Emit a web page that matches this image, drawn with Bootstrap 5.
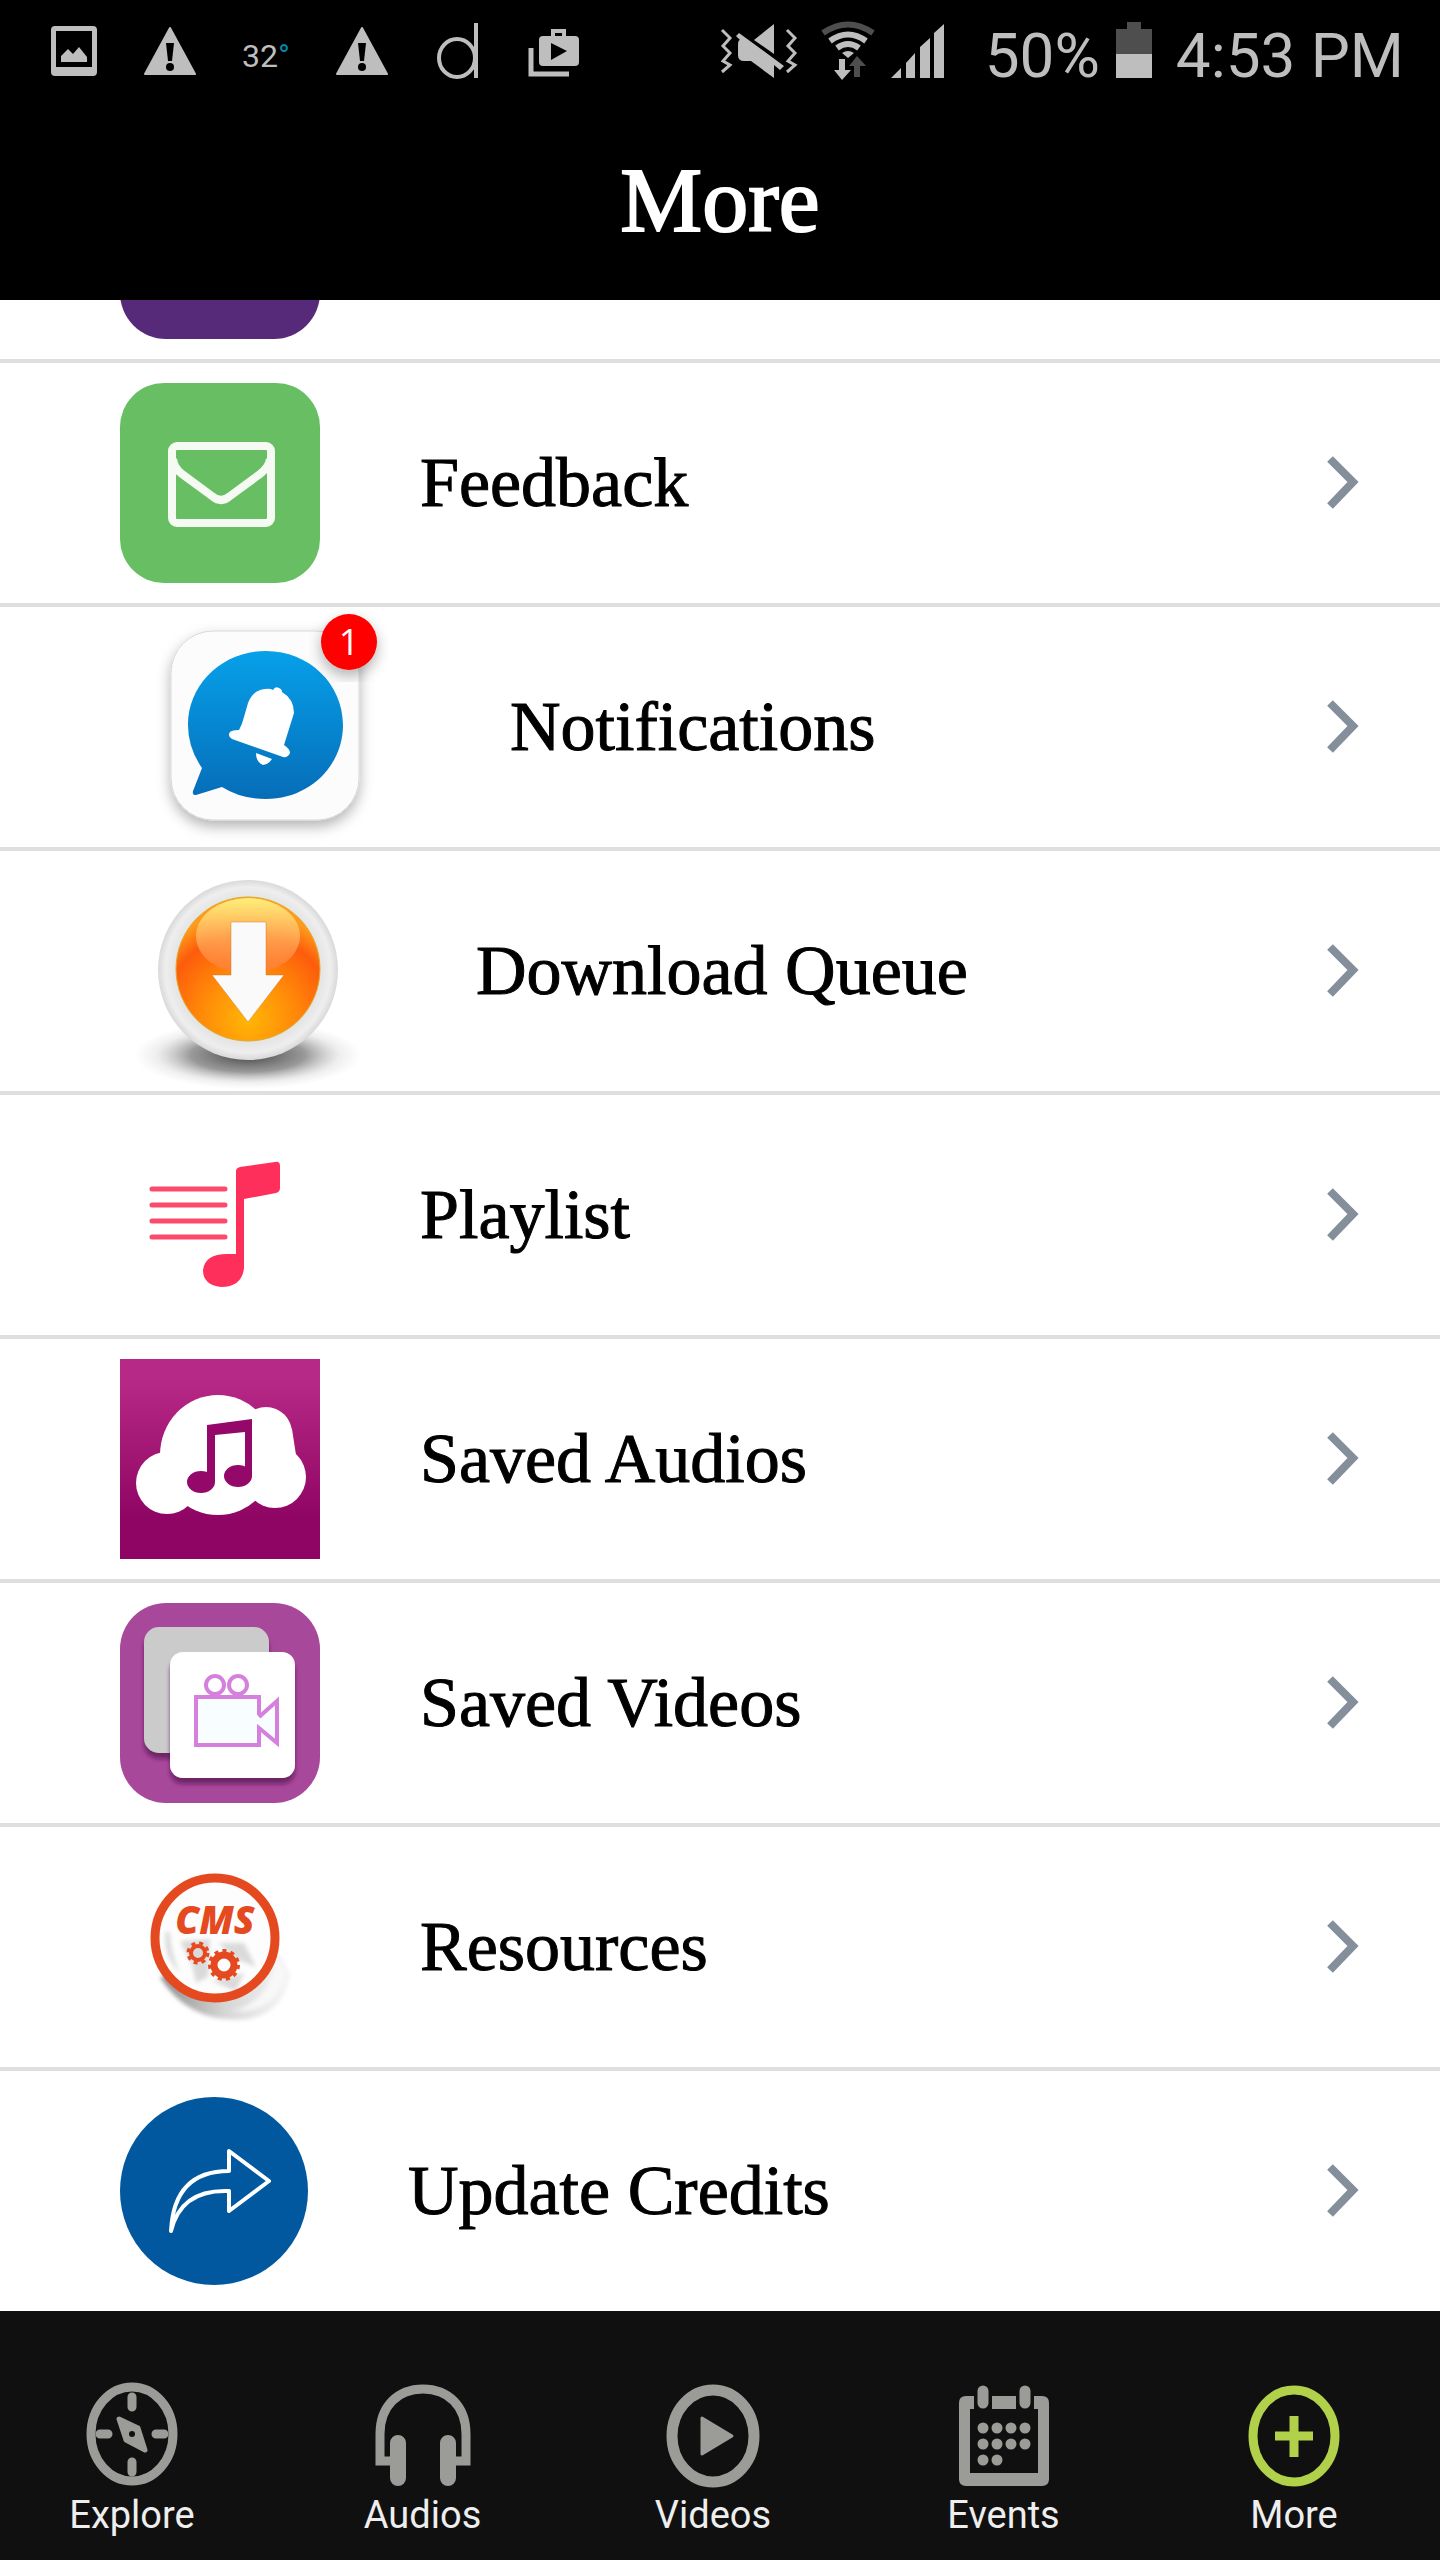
<!DOCTYPE html>
<html lang="en">
<head>
<meta charset="utf-8">
<meta name="viewport" content="width=device-width, initial-scale=1">
<title>More</title>
<link href="https://cdn.jsdelivr.net/npm/bootstrap@5.3.0/dist/css/bootstrap.min.css" rel="stylesheet">
<style>
  body { font-family: "Liberation Serif", serif; background: #fff; color: #000; }
  svg { display: block; flex: none; overflow: visible; }
  .app-head { background: #000; color: #fff; }
  .status-strip { font: 400 62px/112px Roboto, sans-serif; color: #bebebe; padding: 0 36px 0 26px; }
  .notice { width: 96px; }
  .temperature { font-size: 32px; }
  .degree { color: #0088a8; }
  .app-title { font-size: 92px; line-height: 112px; font-weight: 400; padding: 32px 0 44px; -webkit-text-stroke: 2px #fff; }
  .menu-list { border-radius: 0; }
  .menu-list .menu-row { height: 244px; gap: 100px; padding: 0 80px 0 120px; border: 0; border-bottom: 4px solid #dfdfdf; border-radius: 0; font-size: 70px; line-height: 84px; color: #000; -webkit-text-stroke: 1px #000; background: #fff; }
  .menu-list .menu-row:last-child { height: 240px; border-bottom: 0; }
  .menu-list .menu-row.peek { height: 63px; padding-bottom: 20px; overflow: hidden; }
  .tab-strip { background: #101010; padding: 71px 66px 20px 52px; }
  .tab-link { width: 160px; gap: 2px; color: #eee; font: 400 38px/50px Roboto, sans-serif; }
  .tab-link svg { color: #9b9b98; }
  .tab-link.active svg { color: #b1d14b; }
</style>
<script src="https://cdn.jsdelivr.net/npm/bootstrap@5.3.0/dist/js/bootstrap.bundle.min.js"></script>
</head>
<body>
<header class="app-head">
  <div class="status-strip d-flex align-items-center">
    <div class="notice d-flex justify-content-center"><svg width="46" height="112" viewBox="0 0 46 112" fill="#bebebe"><path fill-rule="evenodd" d="M4 26H42Q46 26 46 30V72Q46 76 42 76H4Q0 76 0 72V30Q0 26 4 26ZM5 31V67H41V31Z"/><path d="M10 62V56L17 49L22 54L28 47L36 57V62Z"/></svg></div>
    <div class="notice d-flex justify-content-center"><svg width="52" height="112" viewBox="0 0 52 112"><path d="M26 28L51 74H1Z" fill="#bebebe" stroke="#bebebe" stroke-width="2" stroke-linejoin="round"/><path d="M22 43H30L28 61H24Z"/><circle cx="26" cy="67" r="4"/></svg></div>
    <div class="notice temperature text-center">32<span class="degree">°</span></div>
    <div class="notice d-flex justify-content-center"><svg width="52" height="112" viewBox="0 0 52 112"><path d="M26 28L51 74H1Z" fill="#bebebe" stroke="#bebebe" stroke-width="2" stroke-linejoin="round"/><path d="M22 43H30L28 61H24Z"/><circle cx="26" cy="67" r="4"/></svg></div>
    <div class="notice d-flex justify-content-center"><svg width="42" height="112" viewBox="0 0 42 112" fill="none" stroke="#bebebe" stroke-width="4"><ellipse cx="20" cy="58" rx="18" ry="19"/><path d="M39 23V78"/></svg></div>
    <div class="notice d-flex justify-content-center"><svg width="50" height="112" viewBox="0 0 50 112"><path d="M2 48V74H40" fill="none" stroke="#bebebe" stroke-width="5"/><rect x="10" y="36" width="40" height="30" rx="4" fill="#bebebe"/><path d="M24 37V31H35V37" fill="none" stroke="#bebebe" stroke-width="4"/><path d="M22 43V60L38 51Z"/></svg></div>
    <div class="d-flex align-items-center ms-auto">
      <svg width="77" height="112" viewBox="0 0 77 112" fill="#bebebe"><path d="M54 24V54L34 40ZM20 40L16 36L19 33L64 66L60 70L54 65V78L31 61H24Q18 61 18 55V45Q18 40 20 40Z"/><path d="M2 30L10 38L3 46L10 53L3 61L10 65L2 72M67 30L75 38L68 46L75 53L68 61L75 65L67 72" fill="none" stroke="#bebebe" stroke-width="3"/></svg>
      <svg class="ms-4" width="54" height="112" viewBox="0 0 54 112"><g fill="none" stroke="#bebebe" stroke-width="6"><path d="M2 33Q27 16 52 33" stroke="#4e4e4e"/><path d="M9 41Q27 28 45 41M16 48Q27 40 38 48"/></g><path d="M21 53Q27 49 33 53L27 58ZM18 59H24V70H30L21 80L13 70H18Z" fill="#bebebe"/><path d="M33 77V66H28L36 56L45 66H39V77Z" fill="#4e4e4e"/></svg>
      <svg class="ms-3" width="54" height="112" viewBox="0 0 54 112" fill="#bebebe"><path d="M0 78L10 68V78ZM15 78V63L24 53V78ZM29 78V47L39 38V78ZM43 78V33L53 24V78Z"/></svg>
      <span class="ps-4 ms-3">50%</span>
      <svg class="ms-3" width="36" height="112" viewBox="0 0 36 112"><path d="M11 22H25V29H36V54H0V29H11Z" fill="#4e4e4e"/><path d="M0 54H36V78H0Z" fill="#bebebe"/></svg>
      <span class="ps-4">4:53 PM</span>
    </div>
  </div>
  <h1 class="app-title text-center m-0">More</h1>
</header>

<main class="menu-list list-group">
  <div class="menu-row peek d-flex align-items-end"><svg width="200" height="200"><rect width="200" height="200" rx="46" fill="#562a78"/></svg></div>

  <a href="#feedback" class="menu-row list-group-item list-group-item-action d-flex align-items-center">
    <svg width="200" height="200" viewBox="0 0 200 200"><rect width="200" height="200" rx="44" fill="#68be62"/><g fill="none" stroke="#f5faf3" stroke-width="8"><rect x="52" y="63" width="99" height="77" rx="5"/><path d="M53 76Q54 85 62 91L92 113Q101 121 110 113L140 91Q149 84 150 76"/></g></svg>
    <span>Feedback</span>
    <svg class="ms-auto" width="34" height="56" viewBox="0 0 34 56"><path d="M4 4L27 27L4 51" fill="none" stroke="#848f9b" stroke-width="8"/></svg>
  </a>

  <a href="#notifications" class="menu-row list-group-item list-group-item-action d-flex align-items-center">
    <svg width="290" height="200" viewBox="0 0 290 200">
      <defs>
        <linearGradient id="bubble" x2="0" y2="1"><stop stop-color="#07a0e9"/><stop offset="1" stop-color="#066db8"/></linearGradient>
        <filter id="lift" x="-20%" y="-20%" width="140%" height="140%"><feDropShadow dx="0" dy="6" stdDeviation="7" flood-opacity=".3"/></filter>
      </defs>
      <rect x="51" y="4" width="188" height="189" rx="42" fill="#fcfcfc" stroke="#d8d8d8" filter="url(#lift)"/>
      <path d="M146 24C189 24 223 57 223 98S189 172 146 172Q121 172 102 160L76 168Q72 168 73 164L82 141Q68 121 68 98C68 57 103 24 146 24Z" fill="url(#bubble)"/>
      <path d="M128 76Q133 63 145 62Q150 61 153 63Q155 59 159 61Q162 62 162 65Q174 72 174 86L164 118Q170 122 170 126Q168 131 163 130L112 112Q107 109 110 105Q112 103 119 103Q122 98 124 90ZM136 126L152 132Q148 138 143 138Q136 135 136 126Z" fill="#fff"/>
      <circle cx="229" cy="15" r="28" fill="#fe0000" filter="url(#lift)"/>
      <text x="229" y="28" text-anchor="middle" font-family="Open Sans, sans-serif" font-size="36" fill="#fff" stroke="none" style="-webkit-text-stroke:0">1</text>
    </svg>
    <span>Notifications</span>
    <svg class="ms-auto" width="34" height="56" viewBox="0 0 34 56"><path d="M4 4L27 27L4 51" fill="none" stroke="#848f9b" stroke-width="8"/></svg>
  </a>

  <a href="#downloads" class="menu-row list-group-item list-group-item-action d-flex align-items-center">
    <svg width="256" height="200" viewBox="0 0 256 200">
      <defs>
        <radialGradient id="ground"><stop stop-color="#444"/><stop offset=".5" stop-color="#777" stop-opacity=".75"/><stop offset=".8" stop-color="#aaa" stop-opacity=".2"/><stop offset="1" stop-color="#bbb" stop-opacity="0"/></radialGradient>
        <radialGradient id="rim"><stop offset=".78" stop-color="#e2e2e2"/><stop offset=".92" stop-color="#eeeeee"/><stop offset="1" stop-color="#d9d9d9"/></radialGradient>
        <radialGradient id="orange" cy=".85" r=".75"><stop stop-color="#ffb607"/><stop offset=".45" stop-color="#ff8808"/><stop offset=".8" stop-color="#fd5c0c"/><stop offset="1" stop-color="#ff9a1c"/></radialGradient>
        <linearGradient id="gloss" x2="0" y2="1"><stop stop-color="#ffef7a"/><stop offset=".5" stop-color="#ffb560" stop-opacity=".8"/><stop offset="1" stop-color="#ff7a40" stop-opacity=".6"/></linearGradient>
      </defs>
      <ellipse cx="128" cy="184" rx="114" ry="34" fill="url(#ground)"/>
      <circle cx="128" cy="99" r="90" fill="url(#rim)"/>
      <circle cx="128" cy="98" r="72" fill="url(#orange)" stroke="#e0aa28" stroke-width="1"/>
      <ellipse cx="128" cy="65" rx="52" ry="38" fill="url(#gloss)"/>
      <path d="M111 51H146V104H164L128 151L92 104H111Z" fill="#fafafa" stroke="#c96a20" stroke-opacity=".4"/>
    </svg>
    <span>Download Queue</span>
    <svg class="ms-auto" width="34" height="56" viewBox="0 0 34 56"><path d="M4 4L27 27L4 51" fill="none" stroke="#848f9b" stroke-width="8"/></svg>
  </a>

  <a href="#playlist" class="menu-row list-group-item list-group-item-action d-flex align-items-center">
    <svg width="200" height="200" viewBox="0 0 200 200"><path d="M32 74H105M32 90H105M32 106H105M32 122H105" stroke="#fb4a6c" stroke-width="5" stroke-linecap="round"/><path d="M116 56Q116 53 120 52L155 47Q160 46 160 51V73Q160 77 156 78L124 84V153Q122 172 101 172Q83 170 83 155Q85 139 107 139H116Z" fill="#fe2f5b"/></svg>
    <span>Playlist</span>
    <svg class="ms-auto" width="34" height="56" viewBox="0 0 34 56"><path d="M4 4L27 27L4 51" fill="none" stroke="#848f9b" stroke-width="8"/></svg>
  </a>

  <a href="#saved-audios" class="menu-row list-group-item list-group-item-action d-flex align-items-center">
    <svg width="200" height="200" viewBox="0 0 200 200">
      <defs><linearGradient id="plum" x2="0" y2="1"><stop offset=".1" stop-color="#b72986"/><stop offset=".8" stop-color="#8f0563"/></linearGradient></defs>
      <rect width="200" height="200" fill="url(#plum)"/>
      <g fill="#fff"><circle cx="47" cy="124" r="31"/><ellipse cx="98" cy="96" rx="58" ry="60"/><circle cx="146" cy="74" r="26"/><circle cx="155" cy="118" r="31"/><path d="M120 70H172L176 96H120Z"/></g>
      <g fill="#930868"><path d="M87 66L132 60V117H125V73L95 76V123H87Z"/><ellipse cx="81" cy="123" rx="14" ry="11"/><ellipse cx="118" cy="117" rx="14" ry="11"/></g>
    </svg>
    <span>Saved Audios</span>
    <svg class="ms-auto" width="34" height="56" viewBox="0 0 34 56"><path d="M4 4L27 27L4 51" fill="none" stroke="#848f9b" stroke-width="8"/></svg>
  </a>

  <a href="#saved-videos" class="menu-row list-group-item list-group-item-action d-flex align-items-center">
    <svg width="200" height="200" viewBox="0 0 200 200">
      <defs><filter id="drop" x="-20%" y="-20%" width="140%" height="140%"><feDropShadow dx="0" dy="6" stdDeviation="2" flood-color="#50104c" flood-opacity=".65"/></filter></defs>
      <rect width="200" height="200" rx="46" fill="#a8489a"/>
      <rect x="24" y="24" width="125" height="126" rx="15" fill="#cbcbcb" filter="url(#drop)"/>
      <rect x="50" y="49" width="125" height="126" rx="13" fill="#fff" filter="url(#drop)"/>
      <g fill="none" stroke="#d580dc" stroke-width="4"><path d="M139 112V94H76V142H139V125L157 140V98L139 114" fill="#f8feff"/><circle cx="95" cy="82" r="9"/><circle cx="118" cy="82" r="9"/></g>
    </svg>
    <span>Saved Videos</span>
    <svg class="ms-auto" width="34" height="56" viewBox="0 0 34 56"><path d="M4 4L27 27L4 51" fill="none" stroke="#848f9b" stroke-width="8"/></svg>
  </a>

  <a href="#resources" class="menu-row list-group-item list-group-item-action d-flex align-items-center">
    <svg width="200" height="200" viewBox="0 0 200 200">
      <defs>
        <linearGradient id="curl" x2="1" y2="0"><stop stop-color="#8c8c8c"/><stop offset=".5" stop-color="#d6d6d6"/><stop offset="1" stop-color="#f6f6f6"/></linearGradient>
        <filter id="haze"><feGaussianBlur stdDeviation="2"/></filter>
      </defs>
      <path d="M40 130Q70 178 128 172Q166 164 170 126L154 100Z" fill="url(#curl)" filter="url(#haze)"/>
      <path d="M110 164Q150 158 156 110L166 124Q162 158 126 164Z" fill="#f8f8f8" filter="url(#haze)"/>
      <circle cx="95" cy="91" r="60" fill="#fdfdfd"/>
      <path d="M46 84Q42 108 60 126Q50 104 50 86ZM60 94L90 92L88 130L76 136L72 118ZM98 96H124L136 120L116 112ZM92 134L124 126L116 144Z" fill="#dadada" filter="url(#haze)"/>
      <circle cx="95" cy="91" r="60" fill="none" stroke="#e5491f" stroke-width="9"/>
      <text x="95" y="87" text-anchor="middle" font-family="Open Sans, sans-serif" font-weight="800" font-style="italic" font-size="38" fill="#e5491f" style="-webkit-text-stroke:0">CMS</text>
      <g fill="none" stroke="#e5491f"><circle cx="78" cy="106" r="7" stroke-width="4"/><circle cx="78" cy="106" r="10" stroke-width="3" stroke-dasharray="4 4"/><circle cx="104" cy="118" r="10" stroke-width="7"/><circle cx="104" cy="118" r="14" stroke-width="4" stroke-dasharray="4 4"/></g>
    </svg>
    <span>Resources</span>
    <svg class="ms-auto" width="34" height="56" viewBox="0 0 34 56"><path d="M4 4L27 27L4 51" fill="none" stroke="#848f9b" stroke-width="8"/></svg>
  </a>

  <a href="#credits" class="menu-row list-group-item list-group-item-action d-flex align-items-center">
    <svg width="188" height="188" viewBox="0 0 188 188"><circle cx="94" cy="94" r="94" fill="#02589f"/><path d="M109 54L149 84L109 114V94Q61 92 51 134Q54 74 109 74Z" fill="none" stroke="#fff" stroke-width="4" stroke-linejoin="round"/></svg>
    <span>Update Credits</span>
    <svg class="ms-auto" width="34" height="56" viewBox="0 0 34 56"><path d="M4 4L27 27L4 51" fill="none" stroke="#848f9b" stroke-width="8"/></svg>
  </a>
</main>

<nav class="tab-strip d-flex justify-content-between" aria-label="Sections">
  <a href="#explore" class="tab-link d-flex flex-column align-items-center text-decoration-none">
    <svg width="96" height="106" viewBox="0 0 96 106" fill="none" stroke="currentColor" stroke-width="9"><ellipse cx="48" cy="52" rx="41" ry="47"/><path d="M48 15V25M48 80V90M16 52H24M72 52H80" stroke-linecap="round"/><path d="M35 37L54 46L61 68L42 58Z" fill="currentColor" stroke-width="5" stroke-linejoin="round"/><circle cx="48" cy="52" r="3" fill="#101010" stroke="none"/></svg>
    <span>Explore</span>
  </a>
  <a href="#audios" class="tab-link d-flex flex-column align-items-center text-decoration-none">
    <svg width="96" height="106" viewBox="0 0 96 106" fill="none" stroke="currentColor"><path d="M20 79H5V52C5 24 23 7 48 7S91 24 91 52V79H76" stroke-width="9"/><path d="M23 61V96M73 61V96" stroke-width="16" stroke-linecap="round"/></svg>
    <span>Audios</span>
  </a>
  <a href="#videos" class="tab-link d-flex flex-column align-items-center text-decoration-none">
    <svg width="96" height="106" viewBox="0 0 96 106"><ellipse cx="48" cy="54" rx="41" ry="46" fill="none" stroke="currentColor" stroke-width="11"/><path d="M37 36L67 54L37 72Z" fill="currentColor" stroke="currentColor" stroke-width="3" stroke-linejoin="round"/></svg>
    <span>Videos</span>
  </a>
  <a href="#events" class="tab-link d-flex flex-column align-items-center text-decoration-none">
    <svg width="96" height="106" viewBox="0 0 96 106"><path fill="currentColor" fill-rule="evenodd" d="M10 14H86Q93 14 93 21V97Q93 104 86 104H10Q3 104 3 97V21Q3 14 10 14ZM14 27V91H82V27Z"/><path d="M27 9V22M69 9V22" stroke="#101010" stroke-width="18" stroke-linecap="square"/><path d="M27 9V21M69 9V21" stroke="currentColor" stroke-width="11" stroke-linecap="round"/><path d="M27 46H70M27 62H70M27 78H42" stroke="currentColor" stroke-width="11" stroke-linecap="round" stroke-dasharray="0 14"/></svg>
    <span>Events</span>
  </a>
  <a href="#more" class="tab-link active d-flex flex-column align-items-center text-decoration-none" aria-current="page">
    <svg width="96" height="106" viewBox="0 0 96 106" fill="none" stroke="currentColor" stroke-width="9"><ellipse cx="48" cy="54" rx="41" ry="46"/><path d="M29 54H67M48 34V75"/></svg>
    <span>More</span>
  </a>
</nav>
</body>
</html>
